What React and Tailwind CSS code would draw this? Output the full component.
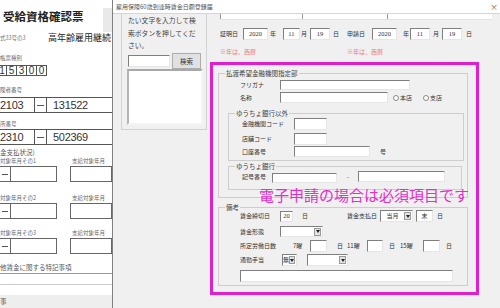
import React from 'react';

const inset =
  'bg-white border border-t-[#7f7f7f] border-l-[#7f7f7f] border-r-[#e6e6e6] border-b-[#e6e6e6]';
const serif = "font-['Liberation_Serif',serif] text-[6.5px]";

const Field = ({ className = '', children }) => (
  <div className={`${inset} shrink-0 flex items-center justify-center ${className}`}>{children}</div>
);

const Combo = ({ className = '', children }) => (
  <div className={`${inset} shrink-0 flex items-center ${className}`}>
    <span className="flex-1 text-center">{children}</span>
    <span className="w-[7px] h-[8px] mr-[1px] bg-[#e3e3e3] border border-[#9a9a9a] flex items-center justify-center">
      <svg width="4" height="3" viewBox="0 0 4 3">
        <path d="M0 0h4L2 3z" fill="#222" />
      </svg>
    </span>
  </div>
);

const Group = ({ title, className = '', children }) => (
  <fieldset className={`border border-[#cdcdcd] shrink-0 ${className}`}>
    <legend className="ml-[6px] px-[1px] text-[6.5px] leading-[6px] text-[#444]">{title}</legend>
    {children}
  </fieldset>
);

const Radio = ({ label, className = '' }) => (
  <div className={`flex items-center shrink-0 ${className}`}>
    <span className="w-[6px] h-[6px] rounded-full bg-white border border-[#8a8a8a]" />
    <span className="ml-[1px]">{label}</span>
  </div>
);

const NumRow = ({ a, b, className = '' }) => (
  <div className={`h-[16px] flex border-y border-[#555] text-[11px] text-[#333] font-['Liberation_Sans',sans-serif] tracking-[-0.3px] ${className}`}>
    <div className="w-[35px] shrink-0 border-r border-[#555] flex items-center">{a}</div>
    <div className="w-[12px] shrink-0 border-r border-[#555] flex items-center justify-center">
      <span className="w-[7px] h-px bg-[#555]" />
    </div>
    <div className="flex-1 flex items-center pl-[6px]">{b}</div>
  </div>
);

const MonthBoxes = ({ className = '' }) => (
  <div className={`h-[16px] flex ${className}`}>
    <div className="w-[58px] shrink-0 ml-[-1px] border border-[#666] flex">
      <div className="w-[11px] border-r border-[#666] flex items-center justify-center">
        <span className="w-[6px] h-px bg-[#555]" />
      </div>
    </div>
    <div className="ml-[13px] flex-1 border border-[#666]" />
  </div>
);

const MonthLabels = ({ n, className = '' }) => (
  <div className={`h-[7px] flex items-center text-[5.5px] text-[#666] ${className}`}>
    <span className="w-[72px] shrink-0">対象年月その{n}</span>
    <span className="whitespace-nowrap">支給対象年月</span>
  </div>
);

export default function App() {
  return (
    <div className="relative w-[500px] h-[308px] overflow-hidden bg-white font-['Noto_Sans_CJK_JP',sans-serif]">
      {/* document behind the dialog */}
      <div className="w-[112px] flex flex-col overflow-hidden">
        <div className="mt-[8px] h-[24px] flex justify-between items-start">
          <span className="pl-[3px] text-[11.5px] leading-[16px] font-bold text-[#222] whitespace-nowrap">受給資格確認票</span>
          <span className="w-[9px] h-[24px] bg-[#e9e9e9]" />
        </div>
        <div className="mt-[1px] h-[10px] flex items-center">
          <span className="w-[48px] shrink-0 text-[5.5px] text-[#777]">式33号の3</span>
          <span className="text-[9px] text-[#222] whitespace-nowrap">高年齢雇用継続</span>
        </div>
        <div className="mt-[12px] h-[6px] leading-[6px] text-[5.5px] text-[#666]">帳票種別</div>
        <div className="mt-[4px] h-[11px] flex ml-[-3px] text-[10px] text-[#333] font-['Liberation_Sans',sans-serif]">
          {['1', '5', '3', '0', '0'].map((d, i) => (
            <div
              key={i}
              className={`w-[10px] h-full border-y border-r border-[#555] flex items-center justify-center ${i === 0 ? 'border-l' : ''}`}
            >
              {d}
            </div>
          ))}
        </div>
        <div className="mt-[11px] h-[6px] leading-[6px] text-[5.5px] text-[#666]">険者番号</div>
        <NumRow a="2103" b="131522" className="mt-[4px]" />
        <div className="mt-[8px] h-[6px] leading-[6px] text-[5.5px] text-[#666]">所番号</div>
        <NumRow a="2310" b="502369" className="mt-[2px]" />
        <div className="mt-[3px] h-[8px] leading-[8px] text-[6.5px] text-[#555]">金支払状況)</div>
        <MonthLabels n="1" className="mt-[2px]" />
        <MonthBoxes className="mt-[1px]" />
        <MonthLabels n="2" className="mt-[13px]" />
        <MonthBoxes className="mt-[1px]" />
        <MonthLabels n="3" className="mt-[11px]" />
        <MonthBoxes className="mt-[1px]" />
        <div className="mt-[9px] h-[11px] border-b border-[#999] flex items-center text-[6.5px] text-[#555] whitespace-nowrap">
          他賃金に関する特記事項
        </div>
        <div className="h-[11px] border-b border-[#ccc]" />
        <div className="mt-[10px] h-[13px] bg-[#eeeeee] flex items-center text-[6.5px] text-[#555]">事</div>
      </div>

      {/* dialog window */}
      <div className="absolute left-[112px] top-0 w-[388px] h-[308px] border-l border-[#808080] bg-[#f0f0f0] flex flex-col">
        <div className="h-[14px] shrink-0 bg-white border-b border-[#d6d6d6] flex items-center justify-between pl-[3px] pr-[2px]">
          <span className="text-[6px] leading-[6px] text-[#555] whitespace-nowrap">雇用保険60歳到達時賃金日額登録届</span>
          <span className="text-[8px] leading-[8px] text-[#666]">×</span>
        </div>

        <div className="flex flex-1 text-[6px] leading-[6px] text-[#333]">
          {/* search panel */}
          <div className="ml-[8px] w-[86px] h-[116px] shrink-0 border-x border-b border-[#d2d2d2] flex flex-col">
            <div className="pl-[6px] text-[6.8px] leading-[12.5px] text-[#444] whitespace-nowrap">
              <div>たい文字を入力して検</div>
              <div>索ボタンを押してくだ</div>
              <div>さい。</div>
            </div>
            <div className="mt-[1.5px] h-[16px] flex items-center">
              <Field className="ml-[6px] w-[42px] h-[12px]" />
              <button className="ml-[2px] w-[29px] h-[16px] border border-[#adadad] bg-[#e1e1e1] text-[6.5px] text-[#333] flex items-center justify-center">
                検索
              </button>
            </div>
            <div className="ml-[5px] w-[76px] h-[56px] bg-white border-[2px] border-t-[#a8a8a8] border-l-[#b4b4b4] border-r-[#f4f4f4] border-b-[#f4f4f4]" />
          </div>

          {/* form */}
          <div className="ml-[1px] flex flex-col">
            <div className="ml-[12px] w-[272px] h-[6px] bg-white flex border-b border-[#e2e2e2]">
              <div className="w-[82px] border-l border-[#9a9a9a]" />
              <div className="w-[85px] border-l border-[#9a9a9a]" />
              <div className="flex-1 border-l border-[#9a9a9a]" />
            </div>

            <div className="mt-[8px] h-[12px] ml-[12px] flex items-center">
              <span className="w-[23px] shrink-0">証明日</span>
              <Field className={`w-[25px] h-[12px] ${serif}`}>2020</Field>
              <span className="w-[15px] shrink-0 pl-[2px]">年</span>
              <Field className={`w-[17px] h-[12px] ${serif}`}>11</Field>
              <span className="w-[10px] shrink-0 pl-[1px]">月</span>
              <Field className={`w-[20px] h-[12px] ${serif}`}>19</Field>
              <span className="w-[17px] shrink-0 pl-[3px]">日</span>
              <span className="w-[25px] shrink-0">申請日</span>
              <Field className={`w-[25px] h-[12px] ${serif}`}>2020</Field>
              <span className="w-[13px] shrink-0 pl-[6px]">年</span>
              <Field className={`w-[20px] h-[12px] ${serif}`}>11</Field>
              <span className="w-[12px] shrink-0 pl-[3px]">月</span>
              <Field className={`w-[20px] h-[12px] ${serif}`}>19</Field>
              <span className="pl-[4px]">日</span>
            </div>

            <div className="mt-[8px] h-[8px] ml-[12px] flex items-center text-[#f07a7a]">
              <span className="w-[127px] shrink-0">※年は、西暦</span>
              <span>※年は、西暦</span>
            </div>

            <Group title="払渡希望金融機関指定部" className="mt-[14px] ml-[10px] w-[250px] pb-[7px]">
              <div className="mt-[4px] h-[10px] flex items-center">
                <span className="ml-[21px] w-[40px] shrink-0">フリガナ</span>
                <Field className="w-[130px] h-[10px]" />
              </div>
              <div className="mt-[2px] h-[11px] flex items-center">
                <span className="ml-[21px] w-[40px] shrink-0">名称</span>
                <Field className="w-[108px] h-[11px]" />
                <Radio label="本店" className="ml-[5px]" />
                <Radio label="支店" className="ml-[11px]" />
              </div>
              <Group title="ゆうちょ銀行以外" className="mt-[7px] ml-[9px] w-[236px] pb-[3px]">
                <div className="mt-[2px] h-[12px] flex items-center">
                  <span className="ml-[13px] w-[52px] shrink-0">金融機関コード</span>
                  <Field className="w-[33px] h-[12px]" />
                </div>
                <div className="mt-[3px] h-[12px] flex items-center">
                  <span className="ml-[13px] w-[52px] shrink-0">店舗コード</span>
                  <Field className="w-[33px] h-[12px]" />
                </div>
                <div className="mt-[1px] h-[11px] flex items-center">
                  <span className="ml-[13px] w-[52px] shrink-0">口座番号</span>
                  <Field className="w-[76px] h-[11px]" />
                  <span className="ml-[10px]">号</span>
                </div>
              </Group>
              <Group title="ゆうちょ銀行" className="mt-[2px] ml-[9px] w-[234px] pb-[6px]">
                <div className="mt-[2px] h-[12px] flex">
                  <span className="ml-[13px] w-[30px] shrink-0 self-center">記号番号</span>
                  <Field className="w-[65px] h-[10px] self-end" />
                  <span className="w-[21px] shrink-0 pl-[10px] self-center">-</span>
                  <Field className="w-[87px] h-[11px] self-start" />
                </div>
              </Group>
            </Group>

            <Group title="備考" className="mt-[6px] ml-[10px] w-[250px] pb-[3px]">
              <div className="h-[12px] flex items-center">
                <span className="ml-[21px] w-[40px] shrink-0">賃金締切日</span>
                <Field className={`w-[13px] h-[11px] ${serif}`}>20</Field>
                <span className="w-[54px] shrink-0 pl-[9px]">日</span>
                <span className="w-[33px] shrink-0">賃金支払日</span>
                <Combo className="w-[33px] h-[12px]">当月</Combo>
                <Field className="ml-[3px] w-[17px] h-[12px]">末</Field>
                <span className="pl-[4px]">日</span>
              </div>
              <div className="mt-[4px] h-[11px] flex items-center">
                <span className="ml-[21px] w-[40px] shrink-0">賃金形態</span>
                <Combo className="w-[43px] h-[11px]" />
              </div>
              <div className="mt-[3px] h-[12px] flex items-center">
                <span className="ml-[21px] w-[53px] shrink-0">所定労働日数</span>
                <span className="w-[17px] shrink-0">7曜</span>
                <Field className="w-[17px] h-[12px]" />
                <span className="w-[20px] shrink-0 pl-[10px]">日</span>
                <span className="w-[20px] shrink-0">11曜</span>
                <Field className="w-[16px] h-[12px]" />
                <span className="w-[17px] shrink-0 pl-[6px]">日</span>
                <span className="w-[23px] shrink-0">15曜</span>
                <Field className="w-[17px] h-[12px]" />
                <span className="pl-[6px]">日</span>
              </div>
              <div className="mt-[2px] h-[12px] flex items-center">
                <span className="ml-[21px] w-[42px] shrink-0">通勤手当</span>
                <Combo className="w-[15px] h-[12px]">無</Combo>
                <Combo className="ml-[10px] w-[41px] h-[12px]" />
              </div>
              <div className="mt-[4px] h-[12px] flex items-center">
                <Field className="ml-[21px] w-[213px] h-[12px]" />
              </div>
            </Group>
          </div>
        </div>
      </div>

      {/* annotation overlay */}
      <div className="absolute left-[210px] top-[62px] w-[269px] h-[233px] border-[3px] border-[#e21ecf]" />
      <div className="absolute left-[259px] top-[186px] text-[15px] leading-[18px] text-[#e22fcb] whitespace-nowrap">
        電子申請の場合は必須項目です
      </div>
    </div>
  );
}
